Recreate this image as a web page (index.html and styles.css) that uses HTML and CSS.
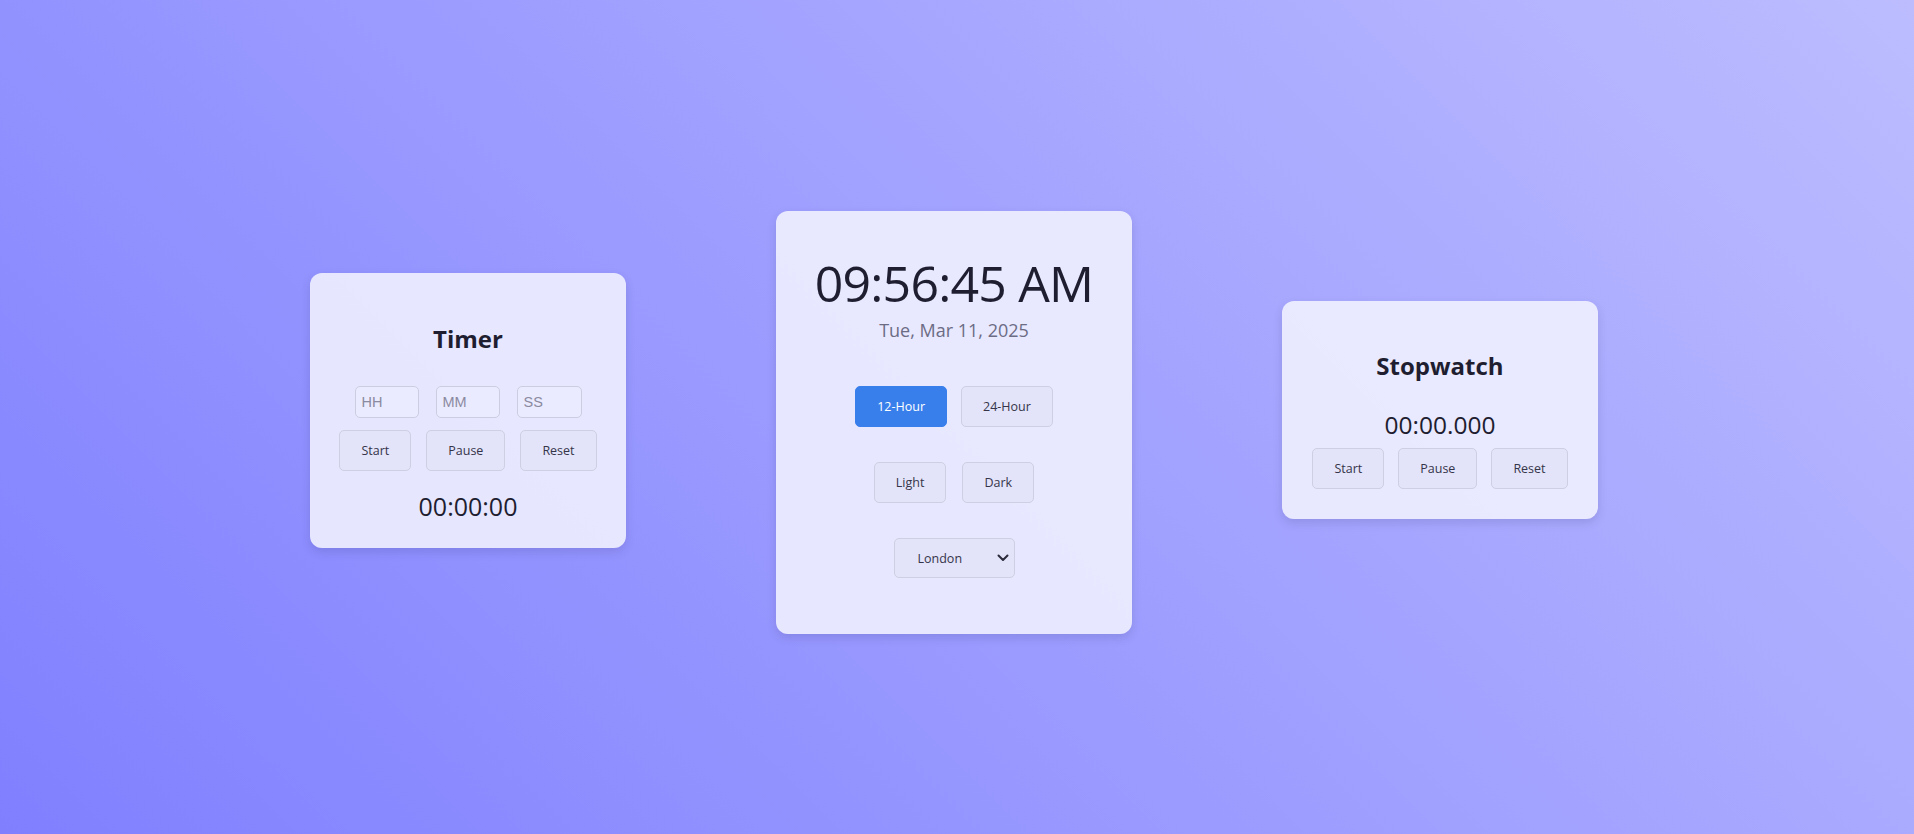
FILE: index.html
```html
<!DOCTYPE html>
<html lang="en">
<head>
<meta charset="utf-8">
<title>Clock</title>
<link rel="stylesheet" href="styles.css">
</head>
<body>
<main class="board">
  <section class="card timer">
    <h2 class="card-title">Timer</h2>
    <div class="inputs">
      <input class="field" type="text" placeholder="HH">
      <input class="field" type="text" placeholder="MM">
      <input class="field field-ss" type="text" placeholder="SS">
    </div>
    <div class="row row-timer">
      <button class="btn">Start</button>
      <button class="btn">Pause</button>
      <button class="btn">Reset</button>
    </div>
    <div class="readout timer-readout">00:00:00</div>
  </section>

  <section class="card clock">
    <div class="time">09:56:45 AM</div>
    <div class="date">Tue, Mar 11, 2025</div>
    <div class="row row-format">
      <button class="btn btn-active">12-Hour</button>
      <button class="btn">24-Hour</button>
    </div>
    <div class="row row-theme">
      <button class="btn">Light</button>
      <button class="btn">Dark</button>
    </div>
    <div class="select-wrap">
      <select class="zone">
        <option>London</option>
      </select>
      <svg class="chev" width="12" height="8" viewBox="0 0 12 8"><path d="M1.5 1.5 L6 6 L10.5 1.5" fill="none" stroke="#2b2b3c" stroke-width="2" stroke-linecap="round" stroke-linejoin="round"/></svg>
    </div>
  </section>

  <section class="card stopwatch">
    <h2 class="card-title">Stopwatch</h2>
    <div class="readout sw-readout">00:00.000</div>
    <div class="row row-sw">
      <button class="btn">Start</button>
      <button class="btn">Pause</button>
      <button class="btn">Reset</button>
    </div>
  </section>
</main>
</body>
</html>
```

FILE: styles.css
```css
* { box-sizing: border-box; }

html, body {
  margin: 0;
  height: 100%;
}

body {
  font-family: "Open Sans", "Noto Sans", sans-serif;
  color: #1e1e30;
  background: linear-gradient(45deg, #8080ff, #bcbcff);
  overflow: hidden;
}

.board {
  height: 100vh;
  display: flex;
  align-items: center;
  justify-content: center;
  gap: 150px;
  padding: 0 6px 14px 0;
}

.card {
  background: rgba(240, 240, 255, 0.9);
  border-radius: 12px;
  box-shadow: 0 4px 10px rgba(40, 40, 90, 0.15);
  display: flex;
  flex-direction: column;
  align-items: center;
}

.timer {
  width: 316px;
  padding: 50px 0 25px;
}

.stopwatch {
  width: 316px;
  padding: 49px 0 30px;
}

.clock {
  width: 356px;
  padding: 42px 0 56px;
  margin-top: 25px;
}

.card-title {
  margin: 0;
  font-size: 24px;
  line-height: 32px;
  font-weight: 700;
  color: #1e1e30;
}

.inputs {
  display: flex;
  gap: 17px;
  margin-top: 31px;
}

.field {
  width: 64px;
  height: 32px;
  padding: 0 6px;
  border: 1px solid #cdcde2;
  border-radius: 5px;
  background: rgba(238, 238, 255, 0.6);
  font-family: "Liberation Sans", Arial, sans-serif;
  font-size: 14.5px;
  color: #1e1e30;
  outline: none;
}

.field-ss { width: 65px; }

.field::placeholder { color: #8a8aa0; }

.row {
  display: flex;
  justify-content: center;
}

.row-timer { gap: 15px; margin-top: 12px; }
.row-sw { gap: 14px; margin-top: 6px; }
.row-format { gap: 14px; margin-top: 44px; }
.row-theme { gap: 16px; margin-top: 35px; }

.btn {
  font-family: "Open Sans", "Noto Sans", sans-serif;
  font-size: 12.5px;
  line-height: 17px;
  padding: 11px 21px;
  border: 1px solid #cfcfe3;
  border-radius: 5px;
  background: #e3e3f9;
  color: #35354a;
  cursor: pointer;
}

.btn-active {
  background: #387fec;
  border-color: #387fec;
  color: #ffffff;
}

.readout {
  font-size: 25px;
  line-height: 34px;
  color: #1e1e30;
}

.timer-readout { margin-top: 18px; }
.sw-readout { margin-top: 26px; font-size: 24.5px; }

.time {
  font-size: 50px;
  line-height: 60px;
  letter-spacing: -0.8px;
  color: #1e1e30;
}

.date {
  margin-top: 5px;
  font-size: 18px;
  line-height: 24px;
  color: #6c6c84;
}

.select-wrap {
  position: relative;
  margin-top: 35px;
}

.zone {
  appearance: none;
  -webkit-appearance: none;
  width: 121px;
  height: 40px;
  padding: 0 0 0 23px;
  border: 1px solid #cfcfe3;
  border-radius: 5px;
  background: #e3e3f9;
  font-family: "Open Sans", "Noto Sans", sans-serif;
  font-size: 12.5px;
  color: #35354a;
  outline: none;
}

.chev {
  position: absolute;
  right: 6px;
  top: 16px;
  pointer-events: none;
}
```
